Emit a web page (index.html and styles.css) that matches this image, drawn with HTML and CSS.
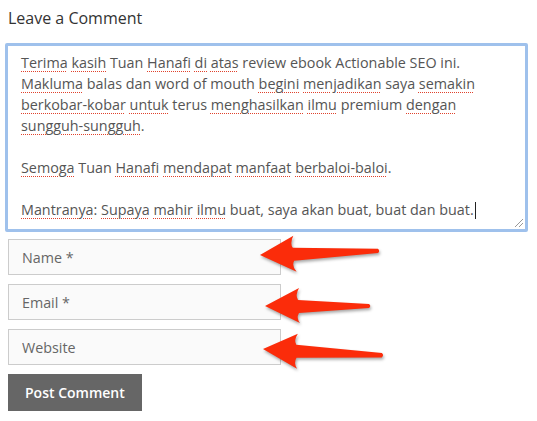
FILE: index.html
```html
<!DOCTYPE html>
<html lang="ms">
<head>
    <meta charset="UTF-8">
    <meta name="viewport" content="width=device-width, initial-scale=1.0">
    <title>Leave a Comment</title>
    <link rel="stylesheet" href="styles.css">
</head>
<body>
    <div class="respond">
        <h3 class="reply-title">Leave a Comment</h3>
        <form class="comment-form">
            <div class="comment-box" role="textbox" aria-multiline="true">
                <span class="typo">Terima</span> <span class="typo">kasih</span> Tuan <span class="typo">Hanafi</span> <span class="typo">di</span> <span class="typo">atas</span> review ebook Actionable SEO ini.<br>
                <span class="typo">Makluma</span> balas dan word of mouth <span class="typo">begini</span> <span class="typo">menjadikan</span> saya <span class="typo">semakin</span><br>
                <span class="typo">berkobar-kobar</span> <span class="typo">untuk</span> terus <span class="typo">menghasilkan</span> <span class="typo">ilmu</span> premium <span class="typo">dengan</span><br>
                <span class="typo">sungguh-sungguh</span>.<br>
                <br>
                <span class="typo">Semoga</span> Tuan <span class="typo">Hanafi</span> <span class="typo">mendapat</span> <span class="typo">manfaat</span> <span class="typo">berbaloi-baloi</span>.<br>
                <br>
                <span class="typo">Mantranya</span>: <span class="typo">Supaya</span> <span class="typo">mahir</span> <span class="typo">ilmu</span> buat, saya akan buat, buat dan buat.<span class="caret"></span>
                <span class="grip"></span>
            </div>

            <input type="text" name="author" placeholder="Name *">
            <input type="email" name="email" placeholder="Email *">
            <input type="url" name="url" placeholder="Website">

            <button type="submit">Post Comment</button>
        </form>
    </div>

    <!-- annotation arrows drawn over the form -->
    <svg class="arrows" width="537" height="421" viewBox="0 0 537 421" aria-hidden="true">
        <path transform="translate(260 255) rotate(-2)" d="M0,0 L34,-18 Q30,-11 33,-6 L118,-2.2 Q120.5,0 118,2.2 L34,7 Q31,12 36,18 Z"/>
        <path transform="translate(265 306)" d="M0,0 L34,-18 Q30,-11 33,-6 L104,-2 Q106.5,0 104,2 L34,7 Q31,12 35,17 Z"/>
        <path transform="translate(263 349) rotate(3)" d="M0,0 L34,-17 Q30,-10 33,-6 L119,-2.2 Q121.5,0 119,2.2 L34,7 Q31,12 35,18 Z"/>
    </svg>
</body>
</html>
```

FILE: styles.css
```css
body {
    margin: 0;
    font-family: "Open Sans", "Liberation Sans", sans-serif;
    color: #333;
    background-color: #fff;
}

.respond {
    padding: 7px 8px;
}

.reply-title {
    margin: 0 0 14px;
    font-size: 16px;
    font-weight: 400;
    line-height: 22px;
    color: #333;
}

.comment-form {
    display: flex;
    flex-direction: column;
    align-items: flex-start;
    gap: 9px;
}

.comment-box {
    position: relative;
    box-sizing: border-box;
    width: 523px;
    height: 189px;
    margin: 0 0 -2px -3px;
    padding: 6px 13px;
    border: 3px solid #9fc1ec;
    border-radius: 2px;
    background-color: #fff;
    font-size: 14.35px;
    line-height: 21px;
    color: #555;
    white-space: nowrap;
}

.typo {
    text-decoration: underline dotted #e0422c;
    text-decoration-thickness: 1px;
    text-underline-offset: 3px;
}

.caret {
    display: inline-block;
    width: 1px;
    height: 17px;
    margin-left: 1px;
    vertical-align: -4px;
    background-color: #222;
}

.grip {
    position: absolute;
    right: 2px;
    bottom: 2px;
    width: 8px;
    height: 8px;
    background: linear-gradient(135deg, transparent 45%, #999 45%, #999 53%, transparent 53%, transparent 70%, #999 70%, #999 78%, transparent 78%);
}

input[type="text"], input[type="email"], input[type="url"] {
    box-sizing: border-box;
    width: 273px;
    height: 36px;
    margin: 0;
    padding: 0 13px;
    border: 1px solid #ccc;
    border-radius: 0;
    background-color: #fafafa;
    font-family: "Open Sans", "Liberation Sans", sans-serif;
    font-size: 14.3px;
    color: #555;
}

input::placeholder {
    color: #666;
    opacity: 1;
}

button {
    height: 37px;
    padding: 0 17px;
    border: none;
    border-radius: 0;
    background-color: #666;
    color: #fff;
    font-family: "Open Sans", "Liberation Sans", sans-serif;
    font-size: 14px;
    font-weight: 600;
    cursor: pointer;
}

.arrows {
    position: absolute;
    top: 0;
    left: 0;
    pointer-events: none;
    fill: #fb2c0a;
    filter: drop-shadow(1px 2px 1.5px rgba(0, 0, 0, 0.35));
}
```
